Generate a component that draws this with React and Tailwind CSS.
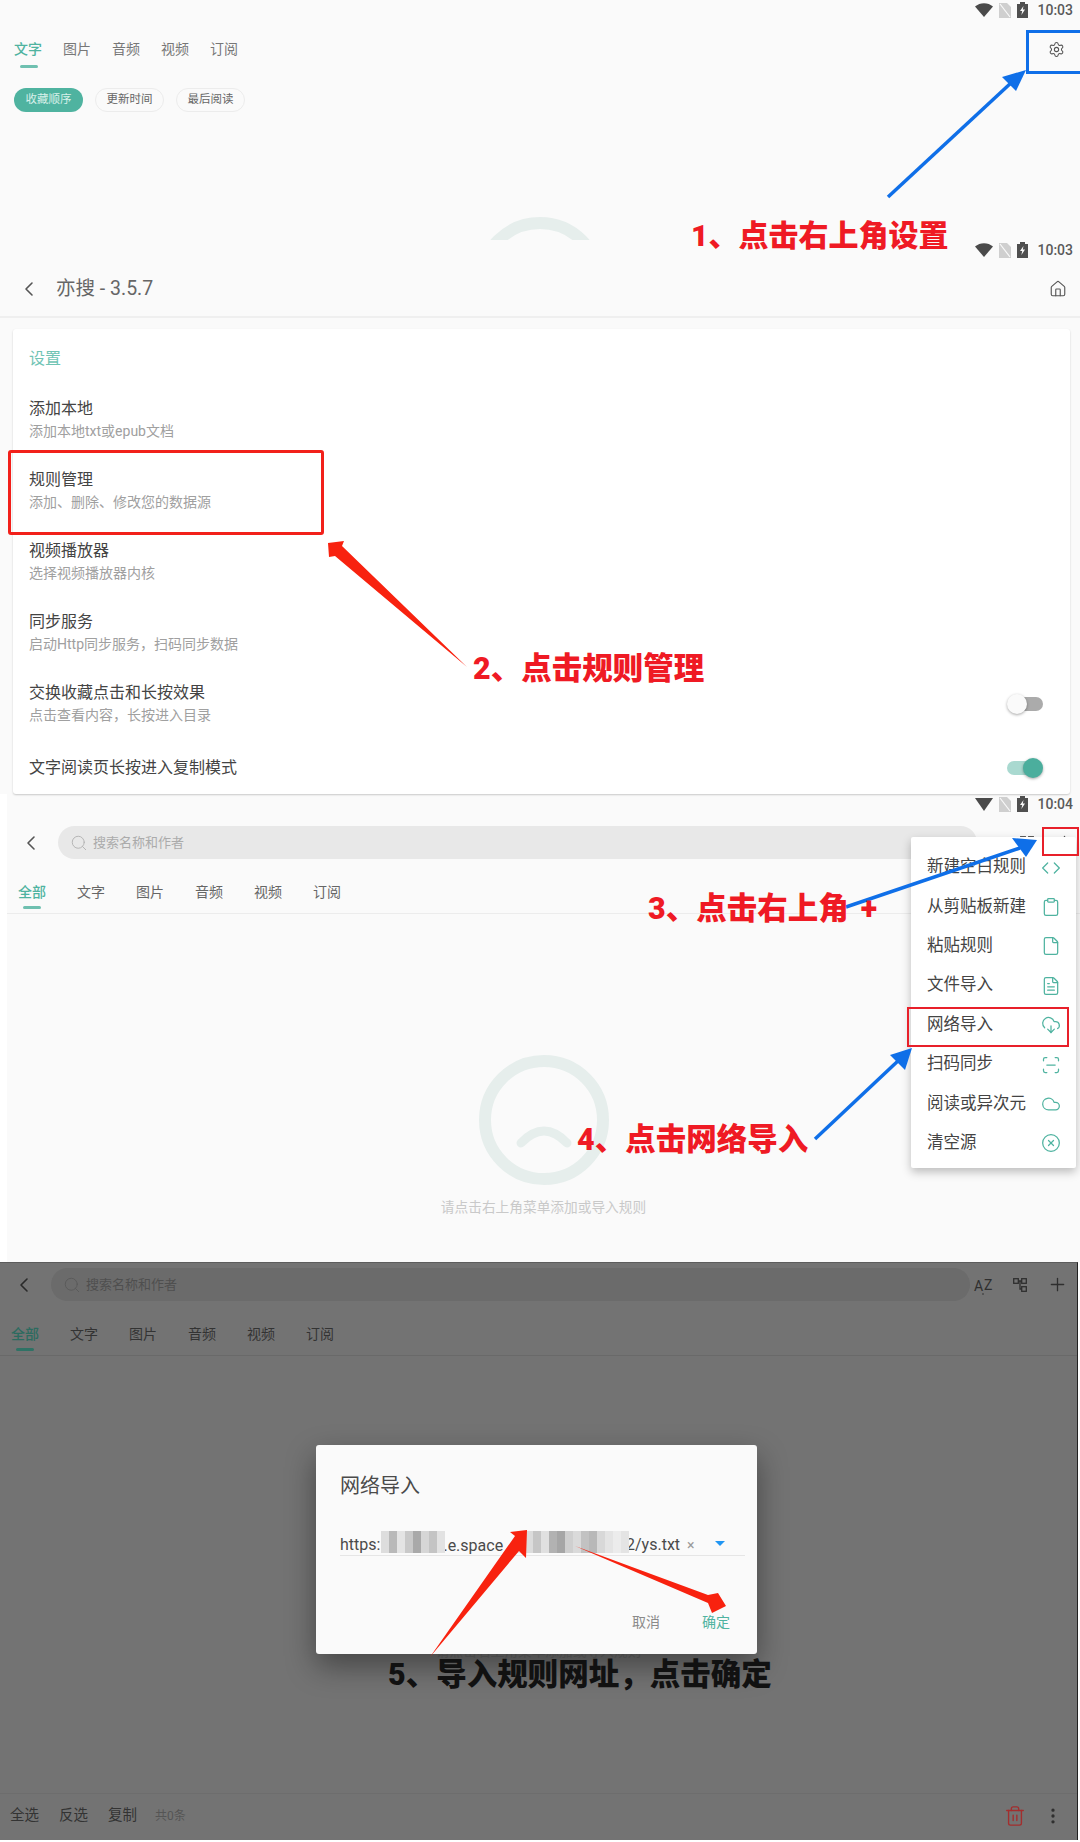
import React from 'react';
import {
  ChevronLeft, Search, Settings, House, Plus, Code, Clipboard, File, FileText,
  CloudDownload, ScanLine, Cloud, CircleX, Trash2, EllipsisVertical
} from 'lucide-react';

const light = {
  page: 'bg-[#fafafa] ml-[7px] w-[1073px]',
  search: 'bg-[#e8e8e8]',
  searchIcon: 'text-[#b4b4b4]',
  placeholder: 'text-[#ababab]',
  tab: 'text-[#666666]',
  active: 'text-[#4fb3a0]',
  bar: 'bg-[#6fc0b0]',
  border: 'border-[#ececec]',
  chevron: 'text-[#555555]',
  icon: 'text-[#555555]',
  message: 'text-[#c9c9c9]',
};

const dark = {
  page: 'bg-[#737373] w-[1078px] border-r border-t border-r-[#222222] border-t-[#5c5c5c]',
  search: 'bg-[#6b6b6b]',
  searchIcon: 'text-[#5a5a5a]',
  placeholder: 'text-[#4f4f4f]',
  tab: 'text-[#333333]',
  active: 'text-[#2c6b5f]',
  bar: 'bg-[#2f7265]',
  border: 'border-[#696969]',
  chevron: 'text-[#2a2a2a]',
  icon: 'text-[#2f2f2f]',
  message: 'text-[#666666]',
};

const ruleTabs = ['全部', '文字', '图片', '音频', '视频', '订阅'];

const settings = [
  { title: '添加本地', desc: '添加本地txt或epub文档' },
  { title: '规则管理', desc: '添加、删除、修改您的数据源' },
  { title: '视频播放器', desc: '选择视频播放器内核' },
  { title: '同步服务', desc: '启动Http同步服务，扫码同步数据' },
  { title: '交换收藏点击和长按效果', desc: '点击查看内容，长按进入目录', toggle: 'off' },
  { title: '文字阅读页长按进入复制模式', toggle: 'on' },
];

const menuItems = [
  { label: '新建空白规则', icon: Code },
  { label: '从剪贴板新建', icon: Clipboard },
  { label: '粘贴规则', icon: File },
  { label: '文件导入', icon: FileText },
  { label: '网络导入', icon: CloudDownload },
  { label: '扫码同步', icon: ScanLine },
  { label: '阅读或异次元', icon: Cloud },
  { label: '清空源', icon: CircleX },
];

// pixelated smear over the url in the dialog
const mosaic = [
  '#dddddd', '#b9b9b9', '#e4e4e4', '#c9c9c9', '#a9a9a9', '#d6d6d6', '#c4c4c4', '#e2e2e2',
  null, null, null, null, null, null, null, null, null,
  '#e6e6e6', '#dcdcdc', '#c6c6c6', '#e0e0e0', '#b2b2b2', '#a6a6a6', '#cfcfcf', '#dadada', '#c2c2c2',
  '#b8b8b8', '#d8d8d8', '#e4e4e4', '#ececec', '#e4e4e4',
];

function StatusBar({ time, round = true }) {
  return (
    <div className="h-5 flex items-center justify-end gap-[6px] pr-[7px] text-[#5a5a5a]">
      <svg width="18" height="14" viewBox="0 0 18 14">
        <path d={round ? 'M0 3.5C5 -1 13 -1 18 3.5L9 14Z' : 'M0 1H18L9 14Z'} fill="#4a4a4a" />
      </svg>
      <svg width="12" height="15" viewBox="0 0 12 15">
        <path d="M0 0H8L12 4V15H0Z" fill="#cfcfcf" />
        <path d="M1 1L11 14" stroke="#fafafa" strokeWidth="1.2" />
      </svg>
      <svg width="11" height="16" viewBox="0 0 11 16">
        <path d="M3 0H8V2H11V16H0V2H3Z" fill="#4f4f4f" />
        <path d="M6.5 4L3 9H5.2L4.4 13L8 7.6H5.8Z" fill="#fafafa" />
      </svg>
      <span className="text-[14px] font-medium ml-[3px] font-['Roboto',sans-serif]">{time}</span>
    </div>
  );
}

function EmptyFace() {
  return (
    <svg width="130" height="130" viewBox="0 0 130 130" fill="none" stroke="#e6eeec" className="shrink-0">
      <circle cx="65" cy="65" r="59" strokeWidth="12" />
      <path d="M42 88Q65 64 88 88" strokeWidth="9" strokeLinecap="round" />
    </svg>
  );
}

function Switch({ on }) {
  return (
    <div className="relative w-9 h-5 flex items-center">
      <div className={`h-[14px] rounded-full ${on ? 'w-[30px] bg-[#a9d9d0]' : 'w-[27px] ml-[9px] bg-[#ababab]'}`} />
      <div className={`absolute top-0 w-5 h-5 rounded-full shadow-[0_1px_3px_rgba(0,0,0,0.35)] ${on ? 'right-0 bg-[#4bae9d]' : 'left-0 bg-[#fafafa]'}`} />
    </div>
  );
}

function TreeIcon() {
  return (
    <svg width="14" height="14" viewBox="0 0 14 14" fill="none" stroke="currentColor" strokeWidth="1.3" className="ml-[17px]">
      <rect x="0.7" y="0.7" width="4.6" height="4.6" />
      <rect x="8.7" y="0.7" width="4.6" height="4.6" />
      <rect x="8.7" y="8.7" width="4.6" height="4.6" />
      <path d="M5.3 3H8.7M7 3V11H8.7" />
    </svg>
  );
}

function AzIcon() {
  return (
    <svg width="24" height="24" viewBox="0 0 24 24" fill="currentColor" fontFamily="Roboto, sans-serif" fontSize="14">
      <text x="2" y="18">A</text>
      <text x="12" y="17">Z</text>
      <circle cx="11" cy="21" r="0.8" />
    </svg>
  );
}

function RulesScreen({ theme, status, height, children }) {
  return (
    <div className={`relative flex flex-col ${theme.page} ${height}`}>
      {status}
      <div className="h-[33px] flex items-center">
        <div className={`w-[51px] flex justify-center pr-[4px] ${theme.chevron}`}>
          <ChevronLeft size={24} strokeWidth={1.6} />
        </div>
        <div className={`w-[919px] h-full rounded-full flex items-center pl-[12px] ${theme.search}`}>
          <Search size={18} strokeWidth={1.3} className={theme.searchIcon} />
          <span className={`ml-[5px] text-[13px] ${theme.placeholder}`}>搜索名称和作者</span>
        </div>
        <div className={`flex items-center ml-[2px] ${theme.icon}`}>
          <AzIcon />
          <TreeIcon />
          <Plus size={21} strokeWidth={1.5} className="ml-[20px]" />
        </div>
      </div>
      <div className={`mt-[20px] h-[35px] flex gap-[31px] pl-[11px] border-b ${theme.border}`}>
        {ruleTabs.map((tab, i) => (
          <div key={tab} className="relative h-[34px]">
            <span className={`block text-[14px] leading-[20px] mt-[3px] ${i === 0 ? `${theme.active} font-medium` : theme.tab}`}>{tab}</span>
            {i === 0 && <div className={`absolute left-[5px] top-[27px] w-[18px] h-[3px] rounded-full ${theme.bar}`} />}
          </div>
        ))}
      </div>
      {children}
    </div>
  );
}

function Annotations() {
  return (
    <>
      <svg width="1080" height="1842" viewBox="0 0 1080 1842" className="absolute inset-0 z-20 pointer-events-none">
        <g stroke="#0f6fe8" strokeWidth="3.5">
          <line x1="888" y1="197" x2="1012" y2="82" />
          <line x1="846" y1="907" x2="1020" y2="848" />
          <line x1="815" y1="1139" x2="899" y2="1060" />
        </g>
        <g fill="#0f6fe8">
          <polygon points="1026,70 1002,77 1016,91" />
          <polygon points="1037,840 1012,838 1026,857" />
          <polygon points="912,1048 890,1055 905,1070" />
        </g>
        <g fill="#f8220f">
          <polygon points="328,543 344,541 342,546 467,667 335,556 329,557" />
          <polygon points="527,1530 510,1532 515,1536 430,1657 519,1551 526,1558" />
          <polygon points="575,1546 708,1595 718,1593 726,1606 712,1613 708,1603" />
        </g>
      </svg>
      <div className="absolute z-20 left-[1026px] top-[30px] w-[60px] h-[44px] border-[3px] border-[#0f6fe8]" />
      <div className="absolute z-20 left-[8px] top-[450px] w-[316px] h-[85px] border-[3px] border-[#f2201a] rounded-[3px]" />
      <div className="absolute z-20 left-[1042px] top-[827px] w-[37px] h-[29px] border-2 border-[#e8202a]" />
      <div className="absolute z-20 left-[907px] top-[1007px] w-[162px] h-[40px] border-2 border-[#e8202a]" />
      <h2 className="absolute z-20 left-[691px] top-[216px] text-[30px] leading-[40px] font-black text-[#ef1a24] whitespace-nowrap">1、点击右上角设置</h2>
      <h2 className="absolute z-20 left-[473px] top-[649px] text-[30.5px] leading-[40px] font-black text-[#ef1a24] whitespace-nowrap">2、点击规则管理</h2>
      <h2 className="absolute z-20 left-[648px] top-[889px] text-[30.5px] leading-[40px] font-black text-[#ef1a24] whitespace-nowrap">3、点击右上角<span className="ml-[12px]">+</span></h2>
      <h2 className="absolute z-20 left-[577px] top-[1120px] text-[30.5px] leading-[40px] font-black text-[#ef1a24] whitespace-nowrap">4、点击网络导入</h2>
      <h2 className="absolute z-20 left-[388px] top-[1655px] text-[30.5px] leading-[40px] font-black text-[#111111] whitespace-nowrap">5、导入规则网址，点击确定</h2>
    </>
  );
}

export default function App() {
  return (
    <div className="relative w-[1080px] h-[1842px] overflow-hidden bg-white font-['Roboto','Noto_Sans_CJK_SC',sans-serif]">
      {/* step 1: home */}
      <div className="h-[240px] bg-[#fafafa] overflow-hidden flex flex-col">
        <StatusBar time="10:03" />
        <div className="mt-[19px] pl-[14px] flex justify-between">
          <div className="relative flex gap-[21px] text-[14px] leading-[20px] text-[#777777]">
            <span className="text-[#4fb3a0] font-medium">文字</span>
            <span>图片</span>
            <span>音频</span>
            <span>视频</span>
            <span>订阅</span>
            <div className="absolute left-[6px] top-[26px] w-[18px] h-[3px] rounded-full bg-[#6fc0b0]" />
          </div>
          <Settings size={17} strokeWidth={1.5} className="mr-[15px] mt-[2px] text-[#555555]" />
        </div>
        <div className="mt-[29px] pl-[14px] flex gap-3 text-[11.5px]">
          <span className="w-[69px] h-[24px] rounded-full bg-[#4fb3a0] text-[#d8f0ea] flex items-center justify-center">收藏顺序</span>
          <span className="w-[69px] h-[24px] rounded-full border border-[#ececec] text-[#666666] flex items-center justify-center">更新时间</span>
          <span className="w-[69px] h-[24px] rounded-full border border-[#ececec] text-[#666666] flex items-center justify-center">最后阅读</span>
        </div>
        <div className="mt-[105px] flex justify-center">
          <EmptyFace />
        </div>
      </div>

      {/* step 2: settings */}
      <div className="relative z-[1] h-[554px] bg-[#fafafa] flex flex-col">
        <StatusBar time="10:03" />
        <div className="h-[58px] flex items-center border-b-2 border-[#efefef] pl-[17px] pr-[13px] pt-[2px] text-[#555555]">
          <ChevronLeft size={24} strokeWidth={1.6} />
          <span className="ml-[15px] text-[19.5px] text-[#666666]">亦搜 - 3.5.7</span>
          <House size={18} strokeWidth={1.5} className="ml-auto" />
        </div>
        <div className="mt-[11px] ml-[13px] w-[1057px] h-[465px] bg-white rounded-[3px] shadow-[0_1px_2px_rgba(0,0,0,0.2)]">
          <div className="h-[55px] flex items-center pl-[16px] pt-[4px] text-[16px] text-[#6fc4b4]">设置</div>
          {settings.map((row) => (
            <div key={row.title} className={`flex items-center justify-between pl-[16px] pr-[27px] ${row.desc ? 'h-[71px]' : 'h-[57px]'}`}>
              <div className="flex flex-col">
                <span className="text-[16px] leading-[24px] text-[#444444]">{row.title}</span>
                {row.desc && <span className="text-[14px] leading-[21px] text-[#a0a0a0]">{row.desc}</span>}
              </div>
              {row.toggle && <Switch on={row.toggle === 'on'} />}
            </div>
          ))}
        </div>
      </div>

      {/* step 3 + 4: rule list with the open menu */}
      <RulesScreen
        theme={light}
        height="h-[468px]"
        status={<div className="h-[32px]"><StatusBar time="10:04" round={false} /></div>}
      >
        <div className="flex flex-col items-center pt-[141px]">
          <EmptyFace />
          <p className={`mt-[12px] text-[13.7px] leading-[20px] ${light.message}`}>请点击右上角菜单添加或导入规则</p>
        </div>
        <div className="absolute z-10 left-[904px] top-[43px] w-[165px] h-[331px] bg-white rounded-[2px] shadow-[0_4px_10px_rgba(0,0,0,0.25)] pt-[11px]">
          {menuItems.map(({ label, icon: Icon }) => (
            <div key={label} className="h-[39.4px] flex items-center justify-between pl-[16px] pr-[15px] text-[16.5px] text-[#444444]">
              <span>{label}</span>
              <Icon size={20} strokeWidth={1.5} className="text-[#4fb3a0]" />
            </div>
          ))}
        </div>
      </RulesScreen>

      {/* step 5: import dialog */}
      <RulesScreen theme={dark} height="h-[578px]" status={<div className="h-[5px]" />}>
        <div className="flex-1 relative flex justify-center">
          <p className={`absolute top-[285px] text-[13.7px] leading-[20px] ${dark.message}`}>请点击右上角菜单添加或导入规则</p>
        </div>
        <div className="h-[47px] border-t border-[#6d6d6d] flex items-center pl-[10px] pr-[14px] pb-[3px] text-[#333333] text-[14.5px]">
          <span>全选</span>
          <span className="ml-[20px]">反选</span>
          <span className="ml-[20px]">复制</span>
          <span className="ml-[18px] text-[12px] text-[#555555]">共0条</span>
          <Trash2 size={22} strokeWidth={1.5} className="ml-auto text-[#a32e2e]" />
          <EllipsisVertical size={20} strokeWidth={2} className="ml-[17px] text-[#2f2f2f]" />
        </div>
        <div className="absolute z-10 left-[316px] top-[182px] w-[441px] h-[209px] bg-[#fafafa] rounded-[3px] shadow-[0_12px_30px_rgba(0,0,0,0.4)] pl-[24px] pr-[12px] flex flex-col">
          <h3 className="mt-[26px] text-[20px] leading-[30px] text-[#4a4a4a]">网络导入</h3>
          <div className="relative mt-[34px] h-[18px] border-b border-[#e6e6e6] flex items-start text-[16px] leading-[20px] text-[#4a4a4a] box-content pb-[2px]">
            <span>https:</span>
            <span className="ml-[63px] mt-[1px]">.e.space</span>
            <span className="absolute left-[286px]">2/ys.txt</span>
            <span className="absolute left-[347px] text-[#9a9a9a] text-[14px]">×</span>
            <div className="absolute left-[375px] top-[6px] border-x-[5px] border-x-transparent border-t-[5px] border-t-[#2196f3]" />
            <div className="absolute left-[41px] top-[-4px] flex">
              {mosaic.map((shade, i) => (
                <div key={i} className="w-2 h-[22px]" style={{ backgroundColor: shade || 'transparent' }} />
              ))}
            </div>
          </div>
          <div className="mt-auto mb-[22px] flex justify-end gap-[42px] pr-[15px] text-[14px] leading-[20px]">
            <span className="text-[#8a8a8a]">取消</span>
            <span className="text-[#4fb3a0]">确定</span>
          </div>
        </div>
      </RulesScreen>

      <Annotations />
    </div>
  );
}
